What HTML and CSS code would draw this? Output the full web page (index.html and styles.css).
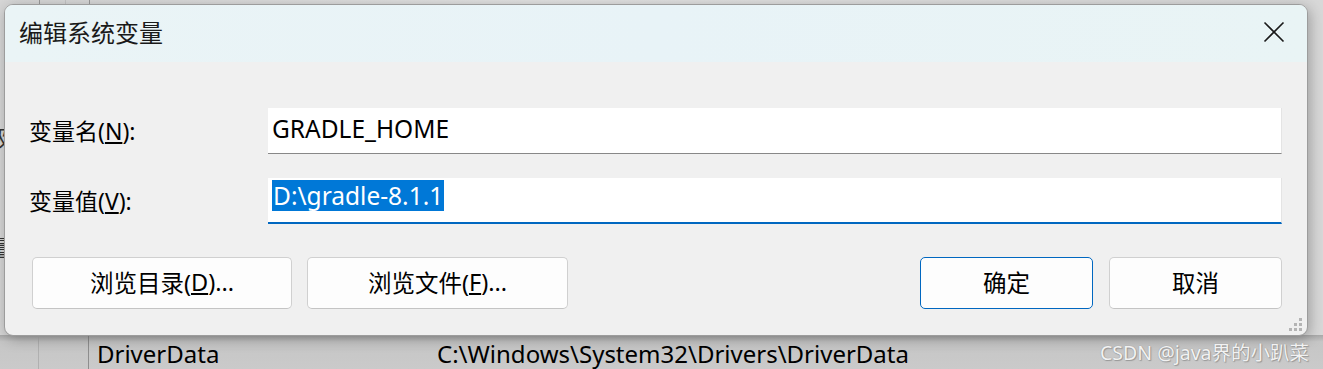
FILE: index.html
```html
<!DOCTYPE html>
<html lang="zh">
<head>
<meta charset="utf-8">
<title>编辑系统变量</title>
<link rel="stylesheet" href="styles.css">
</head>
<body>
<div class="desktop">
  <div class="bg-window">
    <div class="bg-top">
      <div class="bg-cell c1"></div>
      <div class="bg-cell c2"></div>
      <div class="bg-cell c3"></div>
    </div>
    <div class="bg-mid">
      <span class="bg-frag f1">级</span>
      <span class="bg-frag f2">量</span>
    </div>
    <div class="bg-row">
      <div class="bg-col gutter1"></div>
      <div class="bg-col gutter2"></div>
      <div class="bg-name">DriverData</div>
      <div class="bg-value">C:\Windows\System32\Drivers\DriverData</div>
    </div>
  </div>

  <div class="dialog">
    <div class="titlebar">
      <span class="title">编辑系统变量</span>
      <svg class="close" width="22" height="22" viewBox="0 0 22 22"><path d="M1.5 1.5 L20.5 20.5 M20.5 1.5 L1.5 20.5" stroke="#1a1a1a" stroke-width="1.6" fill="none"/></svg>
    </div>
    <div class="content">
      <div class="field">
        <span class="label">变量名(<u>N</u>):</span>
        <div class="input">GRADLE_HOME</div>
      </div>
      <div class="field">
        <span class="label">变量值(<u>V</u>):</span>
        <div class="input focused"><span class="sel">D:\gradle-8.1.1</span></div>
      </div>
      <div class="buttons">
        <div class="group">
          <div class="btn wide">浏览目录(<u>D</u>)...</div>
          <div class="btn wide">浏览文件(<u>F</u>)...</div>
        </div>
        <div class="group right">
          <div class="btn narrow primary">确定</div>
          <div class="btn narrow">取消</div>
        </div>
      </div>
    </div>
    <svg class="grip" width="14" height="14" viewBox="0 0 14 14">
      <rect x="10" y="0" width="3" height="3" fill="#b4b4b4"/>
      <rect x="5" y="5" width="3" height="3" fill="#b4b4b4"/>
      <rect x="10" y="5" width="3" height="3" fill="#b4b4b4"/>
      <rect x="0" y="10" width="3" height="3" fill="#b4b4b4"/>
      <rect x="5" y="10" width="3" height="3" fill="#b4b4b4"/>
      <rect x="10" y="10" width="3" height="3" fill="#b4b4b4"/>
    </svg>
  </div>

  <div class="watermark">CSDN @java界的小趴菜</div>
</div>
</body>
</html>
```

FILE: styles.css
```css
* { box-sizing: border-box; }
html, body { margin: 0; padding: 0; }
body {
  width: 1323px;
  height: 369px;
  overflow: hidden;
  font-family: "Noto Sans", "Noto Sans CJK SC", sans-serif;
  color: #000;
}
.desktop {
  position: relative;
  width: 1323px;
  height: 369px;
  overflow: hidden;
}

/* background window behind the dialog */
.bg-window {
  display: flex;
  flex-direction: column;
  width: 100%;
  height: 100%;
  background: linear-gradient(to right, #d6d6d6, #e2e2e2 40%, #d8d8d8);
}
.bg-top {
  display: flex;
  height: 12px;
}
.bg-cell { height: 100%; border-right: 1px solid #9a9a9a; }
.bg-cell.c1 { width: 40px; }
.bg-cell.c2 { width: 26px; border-right-color: #c4c4c4; }
.bg-cell.c3 { width: 24px; }
.bg-mid {
  flex: 1;
  position: relative;
  font-size: 22px;
}
.bg-frag { position: absolute; left: -12px; color: #333; }
.bg-frag.f1 { top: 108px; }
.bg-frag.f2 { top: 218px; }
.bg-row {
  display: flex;
  align-items: center;
  height: 34px;
  background: linear-gradient(to bottom, #a9a9a9, #c6c6c6 20%, #cacaca);
  font-size: 24px;
}
.bg-col { height: 100%; }
.gutter1 { width: 39px; border-right: 1px solid #b0b0b0; }
.gutter2 { width: 50px; border-right: 1px solid #8e8e8e; }
.bg-name { width: 348px; padding-left: 8px; padding-top: 2px; }
.bg-value { padding-top: 2px; }

/* dialog */
.dialog {
  position: absolute;
  left: 4px;
  top: 4px;
  width: 1304px;
  height: 332px;
  border: 1px solid #9c9c9c;
  border-radius: 9px;
  background: #f0f0f0;
  overflow: hidden;
  display: flex;
  flex-direction: column;
  box-shadow: 2px 3px 14px rgba(0,0,0,0.28);
}
.titlebar {
  height: 57px;
  flex: none;
  display: flex;
  align-items: center;
  justify-content: space-between;
  padding: 0 22px 0 14px;
  background: linear-gradient(to right, #eaf4f6, #e8f3f7 50%, #e9f4f5);
}
.title {
  font-size: 24px;
  color: #1a1a1a;
  padding-bottom: 4px;
}
.close { display: block; margin-bottom: 3px; }

.content {
  flex: 1;
  padding: 46px 25px 0 27px;
  display: flex;
  flex-direction: column;
}
.field {
  display: flex;
  align-items: center;
  height: 46px;
  margin-bottom: 24px;
}
.field:nth-child(2) { margin-bottom: 33px; height: 46px; }
.label {
  width: 236px;
  flex: none;
  font-size: 23px;
  margin-left: -3px;
  margin-right: 3px;
  padding-bottom: 2px;
}
.input {
  flex: 1;
  height: 46px;
  background: #fff;
  border-bottom: 1px solid #888;
  border-right: 1px solid #e4e4e4;
  font-size: 24.5px;
  padding: 0 0 4px 4px;
  display: flex;
  align-items: center;
}
.input.focused {
  border-bottom: 2px solid #0067c0;
  padding-top: 0;
  padding-bottom: 10px;
}
.sel {
  background: #0078d7;
  color: #fff;
  padding: 0 1px 0 1px;
  line-height: 31px;
}

.buttons {
  display: flex;
  justify-content: space-between;
}
.group { display: flex; gap: 15px; }
.group.right { gap: 16px; }
.btn {
  height: 52px;
  background: #fdfdfd;
  border: 1px solid #d0d0d0;
  border-bottom-color: #c4c4c4;
  border-radius: 5px;
  display: flex;
  align-items: center;
  justify-content: center;
  font-size: 23.5px;
  padding-bottom: 2px;
}
.btn.wide { width: 260px; }
.btn.wide + .btn.wide { width: 261px; }
.btn.narrow { width: 173px; }
.btn.primary { border: 1px solid #0067c0; }

.grip {
  position: absolute;
  right: 4px;
  bottom: 3px;
}

.watermark {
  position: absolute;
  left: 1100px;
  top: 337px;
  font-size: 19.5px;
  color: #f2f2f2;
  text-shadow: 0 0 1px #888, 1px 1px 1px #999;
  font-family: "Noto Sans", "Noto Sans CJK SC", sans-serif;
}
```
